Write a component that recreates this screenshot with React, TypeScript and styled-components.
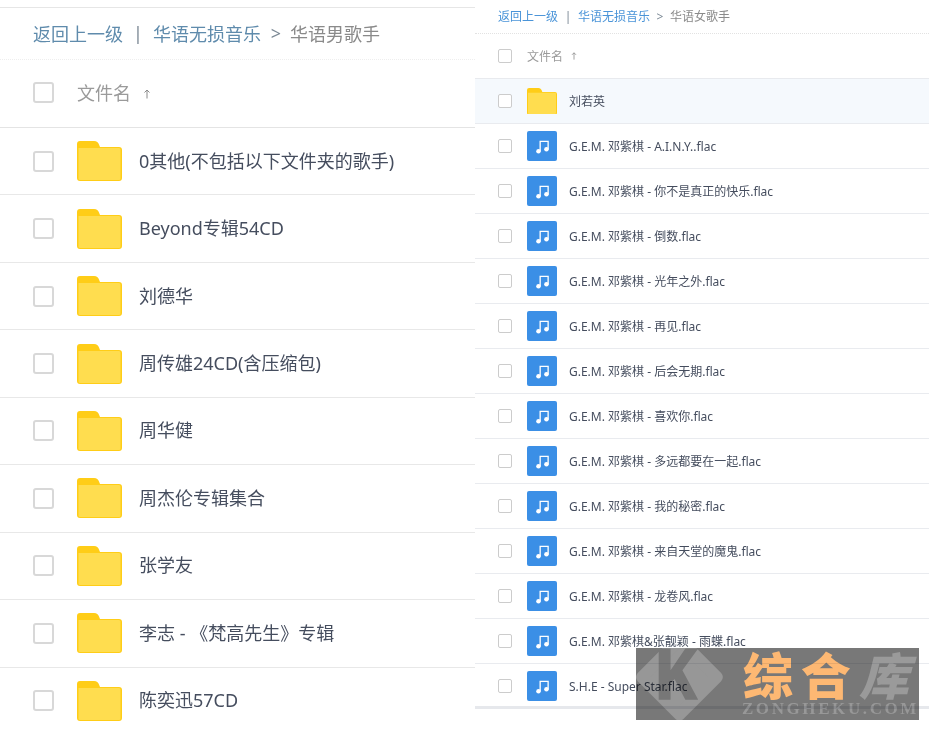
import React from "react"
import styled, { createGlobalStyle } from "styled-components"

const maleSingers = [
    "0其他(不包括以下文件夹的歌手)",
    "Beyond专辑54CD",
    "刘德华",
    "周传雄24CD(含压缩包)",
    "周华健",
    "周杰伦专辑集合",
    "张学友",
    "李志 - 《梵高先生》专辑",
    "陈奕迅57CD",
]

const femaleTracks = [
    "G.E.M. 邓紫棋 - A.I.N.Y..flac",
    "G.E.M. 邓紫棋 - 你不是真正的快乐.flac",
    "G.E.M. 邓紫棋 - 倒数.flac",
    "G.E.M. 邓紫棋 - 光年之外.flac",
    "G.E.M. 邓紫棋 - 再见.flac",
    "G.E.M. 邓紫棋 - 后会无期.flac",
    "G.E.M. 邓紫棋 - 喜欢你.flac",
    "G.E.M. 邓紫棋 - 多远都要在一起.flac",
    "G.E.M. 邓紫棋 - 我的秘密.flac",
    "G.E.M. 邓紫棋 - 来自天堂的魔鬼.flac",
    "G.E.M. 邓紫棋 - 龙卷风.flac",
    "G.E.M. 邓紫棋&张靓颖 - 雨蝶.flac",
    "S.H.E - Super Star.flac",
]

function FolderIcon({ width }: { width: number }): JSX.Element {
    return (
        <svg width={width} viewBox="0 0 45 40" style={{ display: "block" }}>
            <path d="M0 3a3 3 0 0 1 3-3h14c3 0 4 1.500 5 3.500l1 2.500h19a3 3 0 0 1 3 3v28a3 3 0 0 1-3 3H3a3 3 0 0 1-3-3z" fill="#ffcd17" />
            <path d="M1.500 7h40.500a1.500 1.500 0 0 1 1.500 1.500v29a1.500 1.500 0 0 1-1.500 1.500H3a1.500 1.500 0 0 1-1.500-1.500z" fill="#ffdd4f" />
        </svg>
    )
}

function MusicIcon(): JSX.Element {
    return (
        <MusicTile>
            <svg width="15" height="15" viewBox="0 0 16 16" fill="none">
                <path d="M5.500 13V2.500h8.500v8.500" stroke="#fff" strokeWidth="1.400" />
                <circle cx="3.700" cy="13" r="2.400" fill="#fff" />
                <circle cx="12.200" cy="11" r="2.400" fill="#fff" />
            </svg>
        </MusicTile>
    )
}

function SortArrow({ size }: { size: number }): JSX.Element {
    return (
        <svg width={size} height={size} viewBox="0 0 10 10" fill="none" stroke="#8a8a8a" strokeWidth="1">
            <path d="M5 9.500V1M2.500 3.500 5 1l2.500 2.500" />
        </svg>
    )
}

export default function App(): JSX.Element {
    return (
        <>
            <GlobalStyle />
            <Page>
                <LeftPanel>
                    <LeftCrumbs>
                        <CrumbLink>返回上一级</CrumbLink>
                        <CrumbSeparator>|</CrumbSeparator>
                        <CrumbLink>华语无损音乐</CrumbLink>
                        <CrumbSeparator>&gt;</CrumbSeparator>
                        <LeftCurrent>华语男歌手</LeftCurrent>
                    </LeftCrumbs>
                    <LeftHeader>
                        <LeftCheck />
                        <HeaderLabel>文件名</HeaderLabel>
                        <LeftArrow>
                            <SortArrow size={10} />
                        </LeftArrow>
                    </LeftHeader>
                    {maleSingers.map((name) => (
                        <LeftRow key={name}>
                            <LeftCheck />
                            <FolderIcon width={45} />
                            <LeftName>{name}</LeftName>
                        </LeftRow>
                    ))}
                </LeftPanel>

                <RightPanel>
                    <RightCrumbs>
                        <RightLink>返回上一级</RightLink>
                        <RightSeparator>|</RightSeparator>
                        <RightLink>华语无损音乐</RightLink>
                        <RightSeparator>&gt;</RightSeparator>
                        <CrumbCurrent>华语女歌手</CrumbCurrent>
                    </RightCrumbs>
                    <RightHeader>
                        <RightCheck />
                        <HeaderLabel>文件名</HeaderLabel>
                        <RightArrow>
                            <SortArrow size={8} />
                        </RightArrow>
                    </RightHeader>
                    <RightRow $active>
                        <RightCheck />
                        <FolderIcon width={30} />
                        <RightName>刘若英</RightName>
                    </RightRow>
                    {femaleTracks.map((name) => (
                        <RightRow key={name}>
                            <RightCheck />
                            <MusicIcon />
                            <RightName>{name}</RightName>
                        </RightRow>
                    ))}
                    <BottomBar />
                </RightPanel>

                <Watermark>
                    <svg width="88" height="72" viewBox="0 0 88 72">
                        <path d="M44-9 82 29 44 67 6 29z" fill="#979797" stroke="#979797" strokeWidth="12" strokeLinejoin="round" />
                        <path d="M23 0H35V22L50 0H63L47 22 63 52H50L39 31 35 36V52H23z" fill="#777777" />
                    </svg>
                    <WatermarkText>
                        <WatermarkTitle>
                            综合<WatermarkGrey>库</WatermarkGrey>
                        </WatermarkTitle>
                        <WatermarkUrl>ZONGHEKU.COM</WatermarkUrl>
                    </WatermarkText>
                </Watermark>
            </Page>
        </>
    )
}

const GlobalStyle = createGlobalStyle`
    html, body {
        margin: 0;
        background: #ffffff;
    }

    body {
        font-family: "Noto Sans", "Noto Sans CJK SC", sans-serif;
        overflow: hidden;
    }
`

const Page = styled.div`
    position: relative;
    display: flex;
    width: 929px;
    height: 730px;
    overflow: hidden;
    background: #ffffff;
`

const LeftPanel = styled.section`
    width: 475px;
    flex: none;
    padding-top: 7px;
    box-sizing: border-box;
`

const RightPanel = styled.section`
    flex: 1;
    min-width: 0;
`

const LeftCrumbs = styled.div`
    display: flex;
    align-items: center;
    height: 50px;
    padding-left: 33px;
    padding-bottom: 1px;
    border-top: 1px solid #e6e6e6;
    border-bottom: 1px dotted #eeeeee;
    font-size: 18px;
`

const RightCrumbs = styled.div`
    display: flex;
    align-items: center;
    height: 32px;
    padding-left: 23px;
    padding-bottom: 1px;
    border-bottom: 1px dotted #e2e2e2;
    font-size: 12px;
`

const CrumbLink = styled.span`
    color: #5f8bac;
`

const RightLink = styled.span`
    color: #4a94d8;
`

const CrumbSeparator = styled.span`
    width: 30px;
    text-align: center;
    color: #7d8a96;
`

const RightSeparator = styled.span`
    width: 20px;
    text-align: center;
    color: #7d8a96;
`

const CrumbCurrent = styled.span`
    color: #8a8a8a;
`

const LeftCurrent = styled(CrumbCurrent)`
    margin-left: -1px;
`

const LeftHeader = styled.div`
    display: flex;
    align-items: center;
    height: 64px;
    padding-left: 33px;
    padding-bottom: 3px;
    border-bottom: 1px solid #e4e4e4;
    font-size: 18px;

    & > :first-child {
        margin-right: 23px;
    }
`

const RightHeader = styled.div`
    display: flex;
    align-items: center;
    height: 44px;
    padding-left: 23px;
    border-bottom: 1px solid #e8eaee;
    font-size: 12px;

    & > :first-child {
        margin-right: 15px;
    }
`

const HeaderLabel = styled.span`
    color: #9a9a9a;
`

const LeftArrow = styled.span`
    display: flex;
    margin-left: 11px;
    margin-top: 4px;
`

const RightArrow = styled.span`
    display: flex;
    margin-left: 7px;
`

const LeftCheck = styled.span`
    flex: none;
    width: 17px;
    height: 17px;
    border: 2px solid #d8d8d8;
    border-radius: 3px;
    background: #ffffff;
`

const RightCheck = styled.span`
    flex: none;
    width: 12px;
    height: 12px;
    border: 1px solid #cccccc;
    border-radius: 2px;
    background: #ffffff;
`

const LeftRow = styled.div`
    display: flex;
    align-items: center;
    height: 67.45px;
    box-sizing: border-box;
    padding-left: 33px;
    border-bottom: 1px solid #e8e8e8;

    & > :first-child {
        margin-right: 23px;
    }
`

const RightRow = styled.div<{ $active?: boolean }>`
    display: flex;
    align-items: center;
    height: 45px;
    box-sizing: border-box;
    padding-left: 23px;
    background: ${(props) => (props.$active ? "#f5f9fd" : "#ffffff")};
    border-bottom: 1px solid #e9ebef;

    & > :first-child {
        margin-right: 15px;
    }
`

const LeftName = styled.span`
    margin-left: 17px;
    margin-bottom: 1px;
    font-size: 18px;
    line-height: 24px;
    color: #454d5e;
`

const RightName = styled.span`
    margin-left: 12px;
    margin-top: 2px;
    font-size: 12px;
    line-height: 16px;
    color: #454d5e;
`

const MusicTile = styled.span`
    flex: none;
    display: flex;
    align-items: center;
    justify-content: center;
    width: 30px;
    height: 30px;
    border-radius: 2px;
    background: #3b8fe6;
`

const BottomBar = styled.div`
    position: relative;
    height: 3px;
    margin-top: -3px;
    background: #e6e8ec;
`

const Watermark = styled.div`
    position: absolute;
    left: 636px;
    top: 648px;
    display: flex;
    width: 283px;
    height: 72px;
    overflow: hidden;
    background: #787878;
    mix-blend-mode: multiply;
`

const WatermarkText = styled.div`
    display: flex;
    flex-direction: column;
    align-items: flex-start;
    margin-left: 20px;
`

const WatermarkTitle = styled.div`
    height: 52px;
    font-family: "Noto Sans CJK SC", sans-serif;
    font-size: 50px;
    font-weight: 900;
    line-height: 50px;
    letter-spacing: 8px;
    color: #fdb873;
    white-space: nowrap;
`

const WatermarkGrey = styled.span`
    color: #9a9a9a;
    font-style: italic;
    letter-spacing: 0;
`

const WatermarkUrl = styled.div`
    margin-left: -1px;
    font-family: "Liberation Serif", serif;
    font-size: 17px;
    font-weight: 700;
    line-height: 18px;
    letter-spacing: 2.600px;
    color: #989898;
    white-space: nowrap;
`
